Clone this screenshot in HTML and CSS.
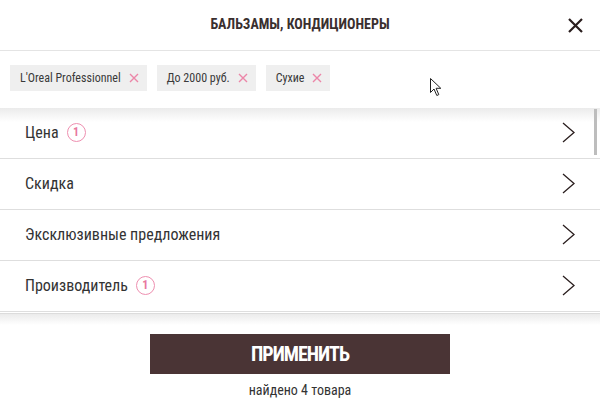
FILE: index.html
```html
<!DOCTYPE html>
<html lang="ru">
<head>
<meta charset="utf-8">
<link rel="stylesheet" href="styles.css">
</head>
<body>
<div class="panel">
  <header class="header">
    <span></span>
    <h1 class="title">БАЛЬЗАМЫ, КОНДИЦИОНЕРЫ</h1>
    <button class="close" aria-label="Закрыть">
      <svg width="15" height="15" viewBox="0 0 15 15"><path d="M1 1L14 14M14 1L1 14" stroke="#2a1e1e" stroke-width="2.2" fill="none"/></svg>
    </button>
  </header>
  <div class="chips">
    <span class="chip">L'Oreal Professionnel <svg class="x" width="10" height="10" viewBox="0 0 10 10"><path d="M1 1L9 9M9 1L1 9" stroke="#ec86a8" stroke-width="1.4" fill="none"/></svg></span>
    <span class="chip">До 2000 руб. <svg class="x" width="10" height="10" viewBox="0 0 10 10"><path d="M1 1L9 9M9 1L1 9" stroke="#ec86a8" stroke-width="1.4" fill="none"/></svg></span>
    <span class="chip">Сухие <svg class="x" width="10" height="10" viewBox="0 0 10 10"><path d="M1 1L9 9M9 1L1 9" stroke="#ec86a8" stroke-width="1.4" fill="none"/></svg></span>
    <svg class="cursor" width="13" height="19" viewBox="0 0 13 19"><path d="M0.5 0.5L0.5 14.5L4 11L6.8 17.5L8.8 16.6L6.1 10.3L10.8 10.3Z" fill="#fff" stroke="#222" stroke-width="1"/></svg>
  </div>
  <div class="list">
    <div class="row"><span class="label">Цена</span><span class="badge">1</span><svg class="chev" width="13" height="21" viewBox="0 0 13 21"><path d="M1 1L12 10.5L1 20" stroke="#2a1e1e" stroke-width="1.3" fill="none"/></svg></div>
    <div class="row"><span class="label">Скидка</span><svg class="chev" width="13" height="21" viewBox="0 0 13 21"><path d="M1 1L12 10.5L1 20" stroke="#2a1e1e" stroke-width="1.3" fill="none"/></svg></div>
    <div class="row"><span class="label">Эксклюзивные предложения</span><svg class="chev" width="13" height="21" viewBox="0 0 13 21"><path d="M1 1L12 10.5L1 20" stroke="#2a1e1e" stroke-width="1.3" fill="none"/></svg></div>
    <div class="row"><span class="label">Производитель</span><span class="badge">1</span><svg class="chev" width="13" height="21" viewBox="0 0 13 21"><path d="M1 1L12 10.5L1 20" stroke="#2a1e1e" stroke-width="1.3" fill="none"/></svg></div>
    <div class="scrollbar"></div>
  </div>
  <footer class="footer">
    <button class="apply">ПРИМЕНИТЬ</button>
    <div class="found">найдено 4 товара</div>
  </footer>
</div>
</body>
</html>
```
FILE: styles.css
```css
* { box-sizing: border-box; }
html, body { margin: 0; padding: 0; background: #fff; }
body { font-family: "Roboto Condensed", "Roboto", sans-serif; color: #333; }
.panel { width: 600px; height: 404px; display: flex; flex-direction: column; overflow: hidden; }
.header { height: 51px; flex: 0 0 auto; display: grid; grid-template-columns: 1fr auto 1fr; align-items: center; border-bottom: 1px solid #e4e4e4; }
.title { margin: 0; font-size: 14px; font-weight: bold; color: #3a2f2f; padding-bottom: 3px; }
.close { justify-self: end; margin-right: 17px; border: 0; background: none; padding: 0; width: 15px; height: 15px; display: flex; margin-top: 1px; }
.chips { position: relative; flex: 0 0 auto; display: flex; gap: 10px; padding: 14px 10px 0; height: 57px; }
.chip { height: 26px; background: #efefef; display: flex; align-items: center; gap: 8px; padding: 0 8px 0 10px; font-size: 12px; color: #3a3a3a; white-space: nowrap; }
.cursor { position: absolute; left: 430px; top: 27px; }
.list { position: relative; flex: 0 0 auto; height: 205px; background: linear-gradient(#ebebeb, #fff 14px); }
.row { height: 51px; display: flex; align-items: center; padding: 0 25px 2px 25px; border-bottom: 1px solid #dedede; font-size: 16px; color: #333; }
.row:last-of-type { border-bottom: 0; }
.label { white-space: nowrap; }
.badge { width: 19px; height: 19px; border: 1.3px solid #ee8fb0; border-radius: 50%; color: #e8789f; font-size: 12px; font-weight: bold; display: flex; align-items: center; justify-content: center; margin-left: 8px; }
.chev { margin-left: auto; }
.scrollbar { position: absolute; right: 3px; top: 1px; width: 3px; height: 46px; background: #bdbdbd; }
.footer { position: relative; flex: 1; display: flex; flex-direction: column; align-items: center; border-top: 1px solid #dcdcdc; background: linear-gradient(#ebebeb, #fff 11px); padding-top: 20px; }
.apply { width: 300px; height: 40px; border: 0; background: #4a3435; color: #fff; font-family: "Roboto Condensed", sans-serif; font-size: 20px; font-weight: bold; letter-spacing: -1px; padding: 0; }
.found { margin-top: 8px; font-size: 14px; color: #333; }
```
